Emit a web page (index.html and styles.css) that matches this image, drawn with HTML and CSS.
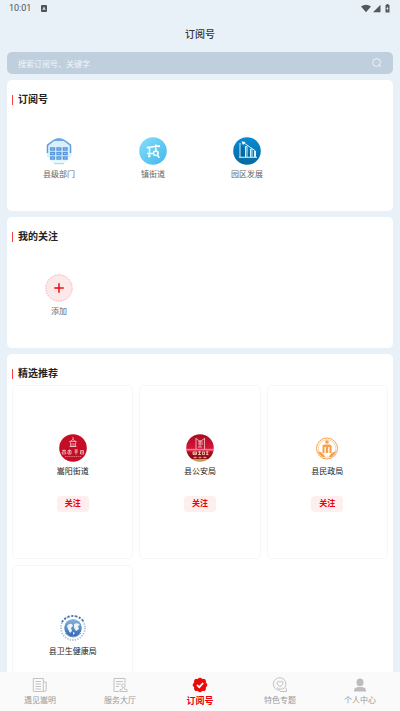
FILE: index.html
```html
<!DOCTYPE html>
<html lang="zh-CN">
<head>
<meta charset="utf-8">
<meta name="viewport" content="width=device-width, initial-scale=1">
<title>订阅号</title>
<link rel="stylesheet" href="styles.css">
</head>
<body>
<div class="status">
  <span class="clock">10:01</span>
  <svg class="app-mark" viewBox="0 0 6 7"><rect width="6" height="7" rx="1" fill="#505356"/><path d="M1.3 5 3 1.5 4.700 5z" fill="#e8eff5"/><path d="M2.500 3.700h1v1h-1z" fill="#505356"/></svg>
  <svg class="signals" viewBox="0 0 30 9">
    <path d="M0 2.500Q5 -1 10 2.500L5 8.300z" fill="#55585a"/>
    <path d="M12 8.200 19.500 .8V8.200z" fill="#55585a"/>
    <path d="M24.500 1h1V0h2v1h1v7.500h-4z" fill="#55585a"/><path d="M26.800 2.300 25.300 5h1.200l-.3 2 1.400-2.800h-1.100z" fill="#fff"/>
  </svg>
</div>
<header class="header"><h1>订阅号</h1></header>
<form class="search">
  <input type="search" aria-label="搜索" placeholder="搜索订阅号、关键字">
  <button type="button" aria-label="搜索按钮"><svg viewBox="0 0 10 10"><circle cx="4.600" cy="4.500" r="3.900"/><path d="M6.600 6.500 8.800 9"/></svg></button>
</form>
<main class="content">
  <section class="panel">
    <h2>订阅号</h2>
    <div class="shortcuts">
      <a class="shortcut" href="#dept">
        <svg viewBox="0 0 28 28">
          <circle cx="14" cy="14" r="13" fill="#e8f6fe"/>
          <path d="M2 20V8L14 1.500 26 8v12" fill="#d9effc"/>
          <path d="M2.500 16V8.200L8 4Q14 0 20 4l5.500 4.200V16" fill="none" stroke="#5f9bdc" stroke-width="1.400"/>
          <path d="M8 4Q14 -1 20 4z" fill="#6da8e5"/>
          <g fill="#dff1ff" stroke="#5696da" stroke-width="1.300"><path d="M5.700 11h3.800v2H5.700zM12 11h3.800v2H12zM18.300 11h3.800v2h-3.800zM5.700 15.500h3.800v2H5.700zM12 15.500h3.800v2H12zM18.300 15.500h3.800v2h-3.800zM5.700 20h3.800v2H5.700zM12 20h3.800v2H12zM18.300 20h3.800v2h-3.800z"/></g>
          <path d="M9 26.700h10" stroke="#9ed1f5"/>
        </svg>
        <span>县级部门</span>
      </a>
      <a class="shortcut" href="#town">
        <svg viewBox="0 0 28 28">
          <defs><linearGradient id="sky" x1="0" y1="0" x2="1" y2="1"><stop offset="0" stop-color="#85ddfb"/><stop offset="1" stop-color="#43b8ea"/></linearGradient></defs>
          <circle cx="14" cy="14" r="13.800" fill="url(#sky)"/>
          <g fill="none" stroke="#fff" stroke-width="1.500" stroke-linecap="round"><path d="M8.500 10.500 20 9M10.500 10.500v8.500M8.500 16.500h5.500M16.800 8v6M18.500 18.500l1.500 1.700"/><circle cx="16.800" cy="16.300" r="2.300"/></g>
          <g fill="#fff"><circle cx="8.700" cy="10.500" r="1.100"/><circle cx="20" cy="9.200" r="1.100"/><circle cx="10.200" cy="19.300" r="1.200"/></g>
        </svg>
        <span>镇街道</span>
      </a>
      <a class="shortcut" href="#park">
        <svg viewBox="0 0 28 28">
          <defs><linearGradient id="sea" x1="0" y1="0" x2="0" y2="1"><stop offset="0" stop-color="#078bd5"/><stop offset="1" stop-color="#05699f"/></linearGradient></defs>
          <circle cx="14" cy="14" r="13.800" fill="url(#sea)"/>
          <path d="M7 7 18 19H7z" fill="#075f94" opacity=".6"/>
          <g fill="none" stroke="#d7f2ff"><path d="M7 6v14M6 20.300h18M9.500 5 22 13.500M12.500 20V9.500h1.500V20M17.500 20v-8h1.500v8M21.500 20v-6h1v6"/></g>
          <path d="M8.500 4.500 12.500 5 10 8z" fill="#fff"/>
        </svg>
        <span>园区发展</span>
      </a>
    </div>
  </section>
  <section class="panel">
    <h2>我的关注</h2>
    <div class="shortcuts">
      <a class="shortcut" href="#add">
        <svg viewBox="0 0 28 28"><circle cx="14" cy="14" r="13.200" fill="#fde8e9" stroke="#f5a0a4" stroke-width=".8" stroke-dasharray="1.500 1"/><path d="M14 9.300v9.400M9.300 14h9.400" stroke="#f00810" stroke-width="1.500"/></svg>
        <span>添加</span>
      </a>
    </div>
  </section>
  <section class="panel featured">
    <h2>精选推荐</h2>
    <div class="cards">
      <article class="card">
        <svg viewBox="0 0 28 28">
          <circle cx="14" cy="14" r="13.800" fill="#c50d25"/>
          <g fill="none" stroke="#f3c0c3" stroke-width=".8"><path d="M14 3v3M10.500 8 14 5.500 17.500 8M11.500 8.500v4h5v-4M10.500 7.500h7M10.500 12.500h7M13 9v3M15 9v3"/>
          <path d="M3 16.500h4M5 15.500v2M3.300 18h3.400v2H3.300zM9 16.500h3v3.500H9zM10.500 15.500v4M15.500 16h3.500M15.500 18h3.500M17 15.500v5M21.500 16.500h3v3.500h-3zM21.500 18h3"/></g>
          <path d="M6 22.500h16" stroke="#e9848f" stroke-width=".8" stroke-dasharray="1.500 .6"/>
        </svg>
        <h3>嵩阳街道</h3><button type="button">关注</button>
      </article>
      <article class="card">
        <svg viewBox="0 0 28 28">
          <defs><linearGradient id="ruby" x1="0" y1="0" x2="0" y2="1"><stop offset="0" stop-color="#a90a20"/><stop offset=".5" stop-color="#d51439"/><stop offset=".57" stop-color="#ed5879"/><stop offset=".65" stop-color="#ae0b1b"/><stop offset=".88" stop-color="#8c0e12"/><stop offset=".9" stop-color="#c69b55"/></linearGradient></defs>
          <circle cx="14" cy="14" r="13.800" fill="url(#ruby)"/>
          <g fill="none" stroke="#efb3b9" stroke-width=".9"><path d="M10 4v11M18.500 4v11M10 4.500l4 3 4.500-3M12 8h5M12 10h5M14 6v7M12 13h4"/></g>
          <path d="M1 15.500h26" stroke="#ff91ac" stroke-width=".7"/>
          <g fill="none" stroke="#f8d9c9" stroke-width=".8"><path d="M7 18h3.500v2.500H7zM7 19.200h3.500M12 18h3M12 20.500h3M13.500 17v4M16.500 18h2v2.500h-2zM20 18h2.500M20 20.500h2.500M21.200 17v4"/><path d="M7.500 23.500h3.500M9 22.500v2M12.500 23.500h3M14 22.500v2M17 23.500h3.500M19 22.500v2" stroke="#e2a595"/></g>
        </svg>
        <h3>县公安局</h3><button type="button">关注</button>
      </article>
      <article class="card">
        <svg viewBox="0 0 28 28">
          <g fill="none" stroke="#f8a550"><circle cx="14" cy="14.500" r="10.500"/><circle cx="14" cy="14.500" r="8.800" stroke-width=".5"/></g>
          <g fill="#f8a048"><circle cx="14" cy="8" r="1.800"/><path d="M9.500 19v-7q0-1.500 2-1.500h5q2 0 2 1.500v7h-2v-6h-1.300v6h-2.400v-6h-1.300v6z"/><path d="M5 17.500q4 0 7 5l-1 1q-4-1-6-6zM23 17.500q-4 0-7 5l1 1q4-1 6-6z"/></g>
        </svg>
        <h3>县民政局</h3><button type="button">关注</button>
      </article>
      <article class="card">
        <svg viewBox="0 0 28 28">
          <defs><linearGradient id="globe" x1="0" y1="0" x2="0" y2="1"><stop offset="0" stop-color="#87b6dc"/><stop offset="1" stop-color="#3268b5"/></linearGradient></defs>
          <circle cx="14" cy="14" r="12" fill="none" stroke="#a9bfdd" stroke-width="1.800" stroke-dasharray="1.300 1.300"/>
          <path d="M3 8A13 13 0 0 1 25 8" fill="none" stroke="#426da8" stroke-width="1.800" stroke-dasharray="1.800 2"/>
          <circle cx="14" cy="13.700" r="8.800" fill="url(#globe)"/>
          <path d="M8 12q2-3 5-2l1 2-2 2 1 3-2 2-2-4zM15 10q4-2 6 1l-2 1 1 3-3 2-2-3zM14 18l2 1-2 2z" fill="#eaf4fa"/>
          <path d="M6 17Q14 26 22 17M6 19Q14 27 22 19" fill="none" stroke="#426fb3" stroke-width=".8"/>
        </svg>
        <h3>县卫生健康局</h3>
      </article>
    </div>
  </section>
</main>
<nav class="tabs">
  <a href="#home"><svg viewBox="0 0 16 16"><path d="M2 14.500q-.7 0-.7-.7V1.500h10v13zM11.300 5h2.900v8q0 1.500-1.500 1.500T11.300 13M3.500 4.500h5.500M3.500 7h5.500M3.500 9.500h5.500M3.500 12h5.500"/></svg><span>遇见嵩明</span></a>
  <a href="#service"><svg viewBox="0 0 16 16"><path d="M7 14.500H2V1.500h11v5M4 4.500h7M4 7h5M4 9.500h3"/><circle cx="11.500" cy="8.700" r="1.800"/><path d="M10.700 10.500 10 12.500H8v2h7v-2h-2l-.7-2"/></svg><span>服务大厅</span></a>
  <a class="active" href="#subscribe" aria-current="page"><svg viewBox="0 0 16 16"><path d="M8 1 10.300 2.300l2.700.3.500 2.700L15 8l-1.500 2.500-.5 2.800-2.700.3L8 15l-2.300-1.400-2.700-.3-.5-2.800L1 8l1.500-2.700L3 2.600l2.700-.3z" fill="#ea0909" stroke="#ea0909" stroke-linejoin="round"/><path d="M5 8 7.300 10.200 11.200 6" stroke="#fff" stroke-width="1.800"/></svg><span>订阅号</span></a>
  <a href="#topic"><svg viewBox="0 0 16 16"><path d="M13.200 10A6.300 6.300 0 1 0 8 13.300M8 9.700Q4 7.300 5 5.200 6.300 3.300 8 5.200 9.700 3.300 11 5.200 12 7.300 8 9.700M5 10.500l2 1.500h3.500M8 14.500h6.500v-2.500l-1.500-1.500-2.500 1.500"/></svg><span>特色专题</span></a>
  <a href="#me"><svg viewBox="0 0 16 16"><g fill="#bdbdbd" stroke="none"><ellipse cx="8" cy="5.300" rx="3.500" ry="3.900"/><path d="M2 14.500v-1.700Q2.500 10.500 6 9.900h4q3.500.6 4 2.900v1.700z"/></g></svg><span>个人中心</span></a>
</nav>
</body>
</html>
```

FILE: styles.css
```css
* { box-sizing: border-box; }

body {
  display: flex;
  flex-direction: column;
  height: 100vh;
  margin: 0;
  overflow: hidden;
  background: #e9f1f8;
  color: #222;
  font-family: Roboto, "Noto Sans CJK SC", sans-serif;
  font-size: 8px;
  line-height: 12px;
}

h1, h2, h3 { margin: 0; font-size: 10px; line-height: 16px; }
svg { display: block; }
a { color: inherit; text-decoration: none; }
button { border: 0; padding: 0; font: inherit; cursor: pointer; }

.status {
  display: flex;
  flex: none;
  align-items: center;
  height: 16px;
  padding: 0 9px;
  color: #505356;
}
.clock { font-size: 9px; }
.app-mark { width: 6px; height: 7px; margin-left: 10px; }
.signals { width: 30px; height: 9px; margin-left: auto; }

.header {
  display: flex;
  flex: none;
  align-items: center;
  justify-content: center;
  height: 36px;
  padding-top: 2px;
}
.header h1 { font-weight: 500; color: #333; }

.search {
  display: flex;
  flex: none;
  align-items: center;
  height: 22px;
  margin: 0 7px 6px;
  padding: 0 11px;
  border-radius: 5px;
  background: #bfcfde;
}
.search input {
  flex: 1;
  min-width: 0;
  height: 14px;
  border: 0;
  padding: 2px 0 0;
  outline: 0;
  background: none;
  font: inherit;
}
.search input::placeholder { color: #f2f6fa; opacity: 1; }
.search button { background: none; }
.search svg { width: 10px; height: 10px; fill: none; stroke: #edf3f8; }

.content {
  display: flex;
  flex: 1;
  flex-direction: column;
  gap: 6px;
  min-height: 0;
  padding: 0 7px;
  overflow: hidden;
}
.panel {
  flex: none;
  padding: 12px 5px 30px;
  border-radius: 5px;
  background: #fff;
}
.panel h2 {
  display: flex;
  align-items: center;
  gap: 5px;
}
.panel h2::before {
  content: "";
  width: 1px;
  height: 10px;
  background: #ff3b3b;
}

.shortcuts {
  display: grid;
  grid-template-columns: repeat(4, 1fr);
  padding-top: 29px;
}
.shortcut {
  display: flex;
  flex-direction: column;
  align-items: center;
  gap: 4px;
  color: #666;
}
.shortcut svg, .card svg { width: 28px; height: 28px; }

.featured { padding-bottom: 5px; }
.cards {
  display: grid;
  grid-template-columns: repeat(3, 1fr);
  grid-auto-rows: 1fr;
  gap: 6px;
  padding-top: 3px;
}
.card {
  display: flex;
  flex-direction: column;
  align-items: center;
  padding: 48px 0 46px;
  border: 1px solid #f6f6f6;
  border-radius: 5px;
}
.card h3 {
  margin-top: 4px;
  font-size: 8px;
  font-weight: 400;
  line-height: 12px;
}
.card button {
  width: 32px;
  height: 16px;
  margin-top: 18px;
  border-radius: 4px;
  background: #feefef;
  color: #ee0008;
  font-weight: 700;
}

.tabs {
  display: grid;
  flex: none;
  grid-template-columns: repeat(5, 1fr);
  height: 39px;
  padding-top: 5px;
  background: #fafafa;
  color: #999;
}
.tabs a {
  display: flex;
  flex-direction: column;
  align-items: center;
  gap: 2px;
}
.tabs svg { width: 16px; height: 16px; fill: none; stroke: #c2c2c2; }
.tabs .active { color: #ee0008; font-size: 9px; font-weight: 700; }
```
